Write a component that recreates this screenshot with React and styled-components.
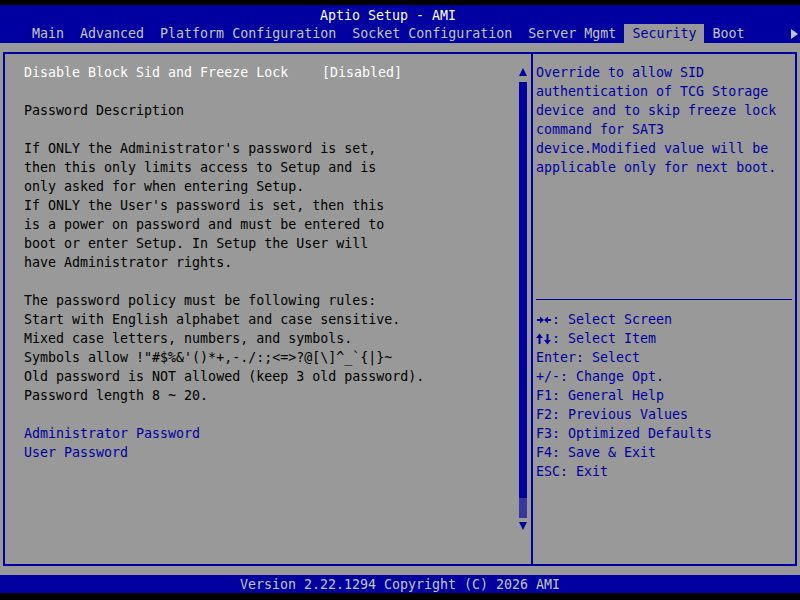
import styled, { createGlobalStyle } from 'styled-components';

const BLUE = '#0000a0';
const GRAY = '#999999';

const GlobalStyle = createGlobalStyle`
  html, body {
    margin: 0;
    padding: 0;
    background: ${GRAY};
  }
  body {
    font-family: "DejaVu Sans Mono", "Liberation Mono", monospace;
    font-size: 13.3px;
    line-height: 19px;
  }
`;

const tabs = [
  'Main',
  'Advanced',
  'Platform Configuration',
  'Socket Configuration',
  'Server Mgmt',
  'Security',
  'Boot',
];

const description = [
  'If ONLY the Administrator\'s password is set,',
  'then this only limits access to Setup and is',
  'only asked for when entering Setup.',
  'If ONLY the User\'s password is set, then this',
  'is a power on password and must be entered to',
  'boot or enter Setup. In Setup the User will',
  'have Administrator rights.',
];

const policy = [
  'The password policy must be following rules:',
  'Start with English alphabet and case sensitive.',
  'Mixed case letters, numbers, and symbols.',
  'Symbols allow !"#$%&\'()*+,-./:;<=>?@[\\]^_`{|}~',
  'Old password is NOT allowed (keep 3 old password).',
  'Password length 8 ~ 20.',
];

const helpText = [
  'Override to allow SID',
  'authentication of TCG Storage',
  'device and to skip freeze lock',
  'command for SAT3',
  'device.Modified value will be',
  'applicable only for next boot.',
];

const HorizArrows = () => (
  <svg width="16" height="19" viewBox="0 0 16 19">
    <path d="M1 10 H5" stroke={BLUE} strokeWidth="2" />
    <path d="M4 6.5 L8 10 L4 13.5 Z" fill={BLUE} />
    <path d="M11 10 H15" stroke={BLUE} strokeWidth="2" />
    <path d="M12 6.5 L8 10 L12 13.5 Z" fill={BLUE} />
  </svg>
);

const VertArrows = () => (
  <svg width="16" height="19" viewBox="0 0 16 19">
    <path d="M3.5 8 V15" stroke={BLUE} strokeWidth="2" />
    <path d="M0 9 L3.5 4.5 L7 9 Z" fill={BLUE} />
    <path d="M11.5 5 V12" stroke={BLUE} strokeWidth="2" />
    <path d="M8 11 L11.5 15.5 L15 11 Z" fill={BLUE} />
  </svg>
);

const keys = [
  { id: 'lr', icon: <HorizArrows />, label: ': Select Screen' },
  { id: 'ud', icon: <VertArrows />, label: ': Select Item' },
  { id: 'enter', label: 'Enter: Select' },
  { id: 'pm', label: '+/-: Change Opt.' },
  { id: 'f1', label: 'F1: General Help' },
  { id: 'f2', label: 'F2: Previous Values' },
  { id: 'f3', label: 'F3: Optimized Defaults' },
  { id: 'f4', label: 'F4: Save & Exit' },
  { id: 'esc', label: 'ESC: Exit' },
];

const App = () => {
  return (
    <>
      <GlobalStyle />
      <Screen>
        <BlackStrip />
        <Header>
          <Title>Aptio Setup - AMI</Title>
          <TabRow>
            {tabs.map((t) => (
              <Tab key={t} $active={t === 'Security'}>
                {t}
              </Tab>
            ))}
            <MoreArrow />
          </TabRow>
        </Header>

        <Frame>
          <LeftPanel>
            <Content>
              <SettingRow>
                <SettingName>Disable Block Sid and Freeze Lock</SettingName>
                <SettingValue>[Disabled]</SettingValue>
              </SettingRow>
              <Blank />
              <Line>Password Description</Line>
              <Blank />
              {description.map((l) => (
                <Line key={l}>{l}</Line>
              ))}
              <Blank />
              {policy.map((l) => (
                <Line key={l}>{l}</Line>
              ))}
              <Blank />
              <Link>Administrator Password</Link>
              <Link>User Password</Link>
            </Content>
            <ScrollBar>
              <ArrowUp />
              <Thumb />
              <Track />
              <ArrowDown />
            </ScrollBar>
          </LeftPanel>

          <RightPanel>
            <HelpArea>
              {helpText.map((l) => (
                <HelpLine key={l}>{l}</HelpLine>
              ))}
            </HelpArea>
            <Divider />
            <KeyArea>
              {keys.map((k) => (
                <HelpLine key={k.id}>
                  {k.icon && <KeyIcon>{k.icon}</KeyIcon>}
                  {k.label}
                </HelpLine>
              ))}
            </KeyArea>
          </RightPanel>
        </Frame>

        <Footer>Version 2.22.1294 Copyright (C) 2026 AMI</Footer>
        <BlackStrip $h={7} />
      </Screen>
    </>
  );
};

export default App;

const Screen = styled.div`
  width: 800px;
  height: 600px;
  display: flex;
  flex-direction: column;
  background: ${GRAY};
  overflow: hidden;
`;

const BlackStrip = styled.div`
  height: ${({ $h }) => $h || 5}px;
  background: #000;
  flex: none;
`;

const Header = styled.div`
  height: 38px;
  background: ${BLUE};
  display: flex;
  flex-direction: column;
  flex: none;
`;

const Title = styled.div`
  height: 18px;
  padding-top: 1px;
  text-align: center;
  color: #ffffff;
  padding-right: 24px;
`;

const TabRow = styled.div`
  position: relative;
  height: 19px;
  display: flex;
  padding-left: 24px;
`;

const Tab = styled.div`
  padding: 0 8px;
  line-height: 20px;
  white-space: pre;
  color: ${({ $active }) => ($active ? BLUE : '#c4c4c4')};
  background: ${({ $active }) => ($active ? GRAY : 'transparent')};
`;

const MoreArrow = styled.span`
  position: absolute;
  right: 2px;
  top: 5px;
  width: 0;
  height: 0;
  border-top: 5px solid transparent;
  border-bottom: 5px solid transparent;
  border-left: 7px solid #c4c4c4;
`;

const Frame = styled.div`
  margin: 9px 3px 0 3px;
  height: 510px;
  border: 2px solid ${BLUE};
  display: grid;
  grid-template-columns: 526px 1fr;
  flex: none;
`;

const LeftPanel = styled.div`
  display: flex;
  padding: 9px 4px 0 19px;
`;

const Content = styled.div`
  flex: 1;
  color: #000;
`;

const SettingRow = styled.div`
  display: grid;
  grid-template-columns: 298px auto;
  color: #ffffff;
`;

const SettingName = styled.span`
  white-space: pre;
`;

const SettingValue = styled.span`
  white-space: pre;
`;

const Line = styled.div`
  white-space: pre;
`;

const Blank = styled.div`
  height: 19px;
`;

const Link = styled.div`
  white-space: pre;
  color: ${BLUE};
`;

const ScrollBar = styled.div`
  width: 8px;
  margin-top: 3px;
  display: flex;
  flex-direction: column;
  align-items: center;
`;

const ArrowUp = styled.div`
  width: 0;
  height: 0;
  margin-top: 2px;
  border-left: 4px solid transparent;
  border-right: 4px solid transparent;
  border-bottom: 8px solid ${BLUE};
`;

const Thumb = styled.div`
  width: 8px;
  height: 416px;
  margin-top: 6px;
  background: ${BLUE};
`;

const Track = styled.div`
  width: 8px;
  height: 20px;
  background-image: radial-gradient(${BLUE} 0.6px, transparent 0.9px);
  background-size: 2px 2px;
`;

const ArrowDown = styled.div`
  width: 0;
  height: 0;
  margin-top: 4px;
  border-left: 4px solid transparent;
  border-right: 4px solid transparent;
  border-top: 8px solid ${BLUE};
`;

const RightPanel = styled.div`
  border-left: 2px solid ${BLUE};
  display: flex;
  flex-direction: column;
  color: ${BLUE};
`;

const HelpArea = styled.div`
  height: 236px;
  padding: 9px 0 0 3px;
`;

const HelpLine = styled.div`
  display: flex;
  white-space: pre;
`;

const KeyIcon = styled.span`
  display: flex;
  width: 16px;
  height: 19px;
`;

const Divider = styled.div`
  height: 1px;
  margin: 0 3px;
  background: ${BLUE};
`;

const KeyArea = styled.div`
  padding: 10px 0 0 3px;
`;

const Footer = styled.div`
  margin-top: 9px;
  height: 18px;
  line-height: 19px;
  background: ${BLUE};
  color: #c4c4c4;
  text-align: center;
  flex: none;
`;
